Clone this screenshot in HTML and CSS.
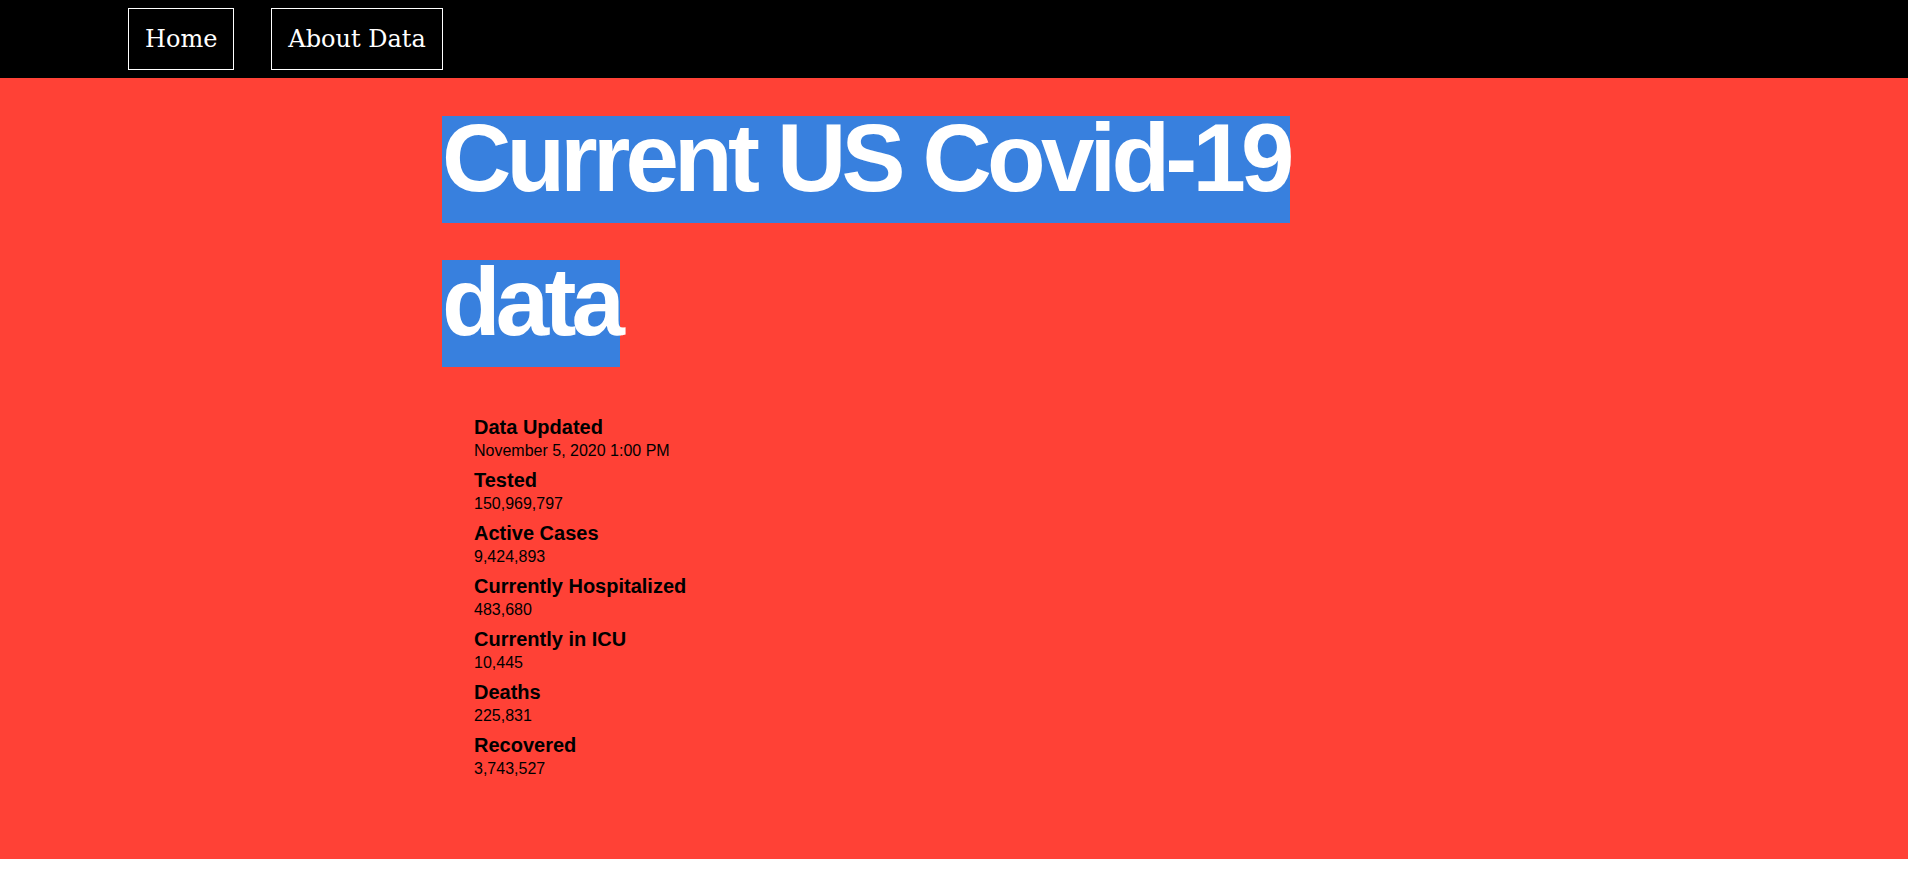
FILE: index.html
```html
<!DOCTYPE html>
<html lang="en">
<head>
<meta charset="utf-8">
<title>Current US Covid-19 data</title>
<link rel="stylesheet" href="styles.css">
</head>
<body>
<nav class="topnav">
  <a class="nav-btn" href="#">Home</a>
  <a class="nav-btn" href="#">About Data</a>
</nav>
<main class="hero">
  <div class="container">
    <h1 class="title"><span class="title-mark"><span class="title-text">Current US Covid-19 data</span></span></h1>
    <dl class="stats">
      <div class="stat"><dt>Data Updated</dt><dd>November 5, 2020 1:00 PM</dd></div>
      <div class="stat"><dt>Tested</dt><dd>150,969,797</dd></div>
      <div class="stat"><dt>Active Cases</dt><dd>9,424,893</dd></div>
      <div class="stat"><dt>Currently Hospitalized</dt><dd>483,680</dd></div>
      <div class="stat"><dt>Currently in ICU</dt><dd>10,445</dd></div>
      <div class="stat"><dt>Deaths</dt><dd>225,831</dd></div>
      <div class="stat"><dt>Recovered</dt><dd>3,743,527</dd></div>
    </dl>
  </div>
</main>
</body>
</html>
```
FILE: styles.css
```css
html, body {
  margin: 0;
  padding: 0;
  background: #ffffff;
}

.topnav {
  background: #000000;
  display: flex;
  gap: 37px;
  padding: 8px 0 8px 128px;
  height: 62px;
}

.nav-btn {
  display: block;
  border: 1px solid #ffffff;
  padding: 16px 16px;
  color: #ffffff;
  text-decoration: none;
  font-family: "DejaVu Serif", serif;
  font-size: 24px;
  line-height: 28px;
}

.hero {
  background: #ff4136;
  padding: 20px 0 72px;
  font-family: "Liberation Sans", Arial, sans-serif;
  color: #000000;
}

.container {
  width: 1024px;
  margin: 0 auto;
}

.title {
  margin: 0 0 30px;
  font-size: 96px;
  line-height: 144px;
  font-weight: 700;
  letter-spacing: -0.05em;
  color: #ffffff;
}

.title-mark {
  background: #3880de;
}

.title-text {
  line-height: 0;
  vertical-align: 12px;
}

.stats {
  margin: 0;
  padding-left: 32px;
}

.stat {
  margin-bottom: 6px;
}

.stat dt {
  font-size: 20px;
  line-height: 23px;
  font-weight: 700;
}

.stat dd {
  margin: 0;
  font-size: 16px;
  line-height: 24px;
}
```
